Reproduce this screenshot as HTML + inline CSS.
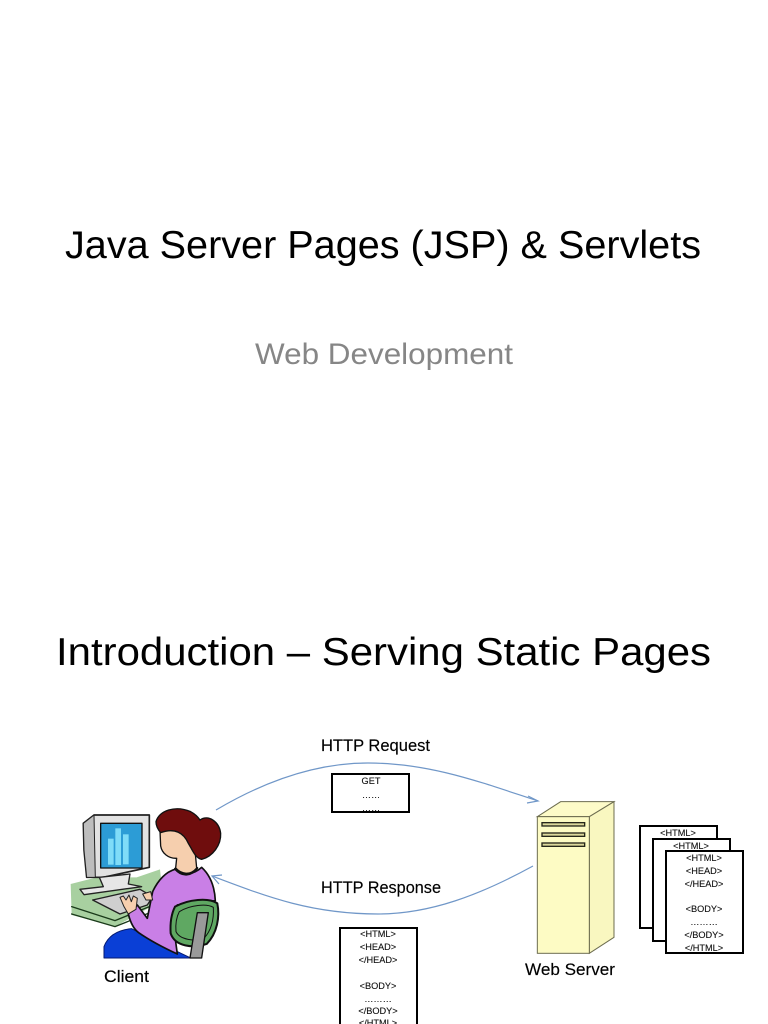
<!DOCTYPE html>
<html><head><meta charset="utf-8"><style>
html,body{margin:0;padding:0;background:#fff;width:768px;height:1024px;overflow:hidden}
svg{display:block;filter:blur(.35px)}
text{font-family:"Liberation Sans",sans-serif;fill:#000}
.l{font-size:16.3px;stroke:#000;stroke-width:.15}
.s{font-size:9.2px;text-anchor:middle;fill:#111;stroke:#111;stroke-width:.12}
</style></head><body>
<svg width="768" height="1024" viewBox="0 0 768 1024" xmlns="http://www.w3.org/2000/svg">
<text x="65" y="258" font-size="39" textLength="636" lengthAdjust="spacingAndGlyphs">Java Server Pages (JSP) &amp; Servlets</text>
<text x="255" y="364" font-size="30" textLength="258" lengthAdjust="spacingAndGlyphs" style="fill:#868686">Web Development</text>
<text x="56" y="665" font-size="39" textLength="655" lengthAdjust="spacingAndGlyphs">Introduction – Serving Static Pages</text>

<!-- arcs -->
<g fill="none" stroke="#7097c8" stroke-width="1.2">
<path d="M216 810C270 778 320 763 368 763C430 763 480 782 538 801"/>
<path d="M528 796L538 801L527 803"/>
<path d="M533 866C480 895 430 914 378 914C310 914 265 896 212 876"/>
<path d="M222 875L212 876L219 884"/>
</g>
<text class="l" x="321" y="751" textLength="109" lengthAdjust="spacingAndGlyphs">HTTP Request</text>
<text class="l" x="321" y="893" textLength="120" lengthAdjust="spacingAndGlyphs">HTTP Response</text>
<text class="l" x="104" y="982" textLength="45" lengthAdjust="spacingAndGlyphs">Client</text>
<text class="l" x="525" y="975" textLength="90" lengthAdjust="spacingAndGlyphs">Web Server</text>

<!-- request box -->
<rect x="332" y="774" width="77" height="38" fill="#fff" stroke="#000" stroke-width="2"/>
<text class="s" x="371" y="784">GET</text>
<text class="s" x="371" y="798">……</text>
<text class="s" x="371" y="811">……</text>

<!-- response box -->
<rect x="340" y="928" width="77" height="110" fill="#fff" stroke="#000" stroke-width="2"/>
<g>
<text class="s" x="378" y="937">&lt;HTML&gt;</text>
<text class="s" x="378" y="950">&lt;HEAD&gt;</text>
<text class="s" x="378" y="963">&lt;/HEAD&gt;</text>
<text class="s" x="378" y="989">&lt;BODY&gt;</text>
<text class="s" x="378" y="1002">………</text>
<text class="s" x="378" y="1014">&lt;/BODY&gt;</text>
<text class="s" x="378" y="1026">&lt;/HTML&gt;</text>
</g>

<!-- doc stack -->
<rect x="640" y="826" width="77" height="102" fill="#fff" stroke="#000" stroke-width="2"/>
<text class="s" x="678" y="836">&lt;HTML&gt;</text>
<rect x="653" y="839" width="77" height="102" fill="#fff" stroke="#000" stroke-width="2"/>
<text class="s" x="691" y="849">&lt;HTML&gt;</text>
<rect x="666" y="851" width="77" height="102" fill="#fff" stroke="#000" stroke-width="2"/>
<text class="s" x="704" y="861">&lt;HTML&gt;</text>
<text class="s" x="704" y="874">&lt;HEAD&gt;</text>
<text class="s" x="704" y="887">&lt;/HEAD&gt;</text>
<text class="s" x="704" y="912">&lt;BODY&gt;</text>
<text class="s" x="704" y="925">………</text>
<text class="s" x="704" y="938">&lt;/BODY&gt;</text>
<text class="s" x="704" y="951">&lt;/HTML&gt;</text>

<!-- server -->
<g transform="translate(510 780) scale(.3333)" stroke="#6d6d50" stroke-width="3">
<path d="M82 110L152 65L312 65L238 110Z" fill="#fdfbc8"/>
<path d="M238 110L312 65L312 472L238 520Z" fill="#f9f7c0"/>
<rect x="82" y="110" width="156" height="410" fill="#fdfbc4"/>
<g fill="#dcd89c" stroke="#26261a" stroke-width="4">
<rect x="96" y="128" width="128" height="10"/>
<rect x="96" y="159" width="128" height="10"/>
<rect x="96" y="189" width="128" height="10"/>
</g>
</g>

<!-- client clipart -->
<g transform="translate(60 790) scale(.3333)" stroke-linejoin="round" stroke-linecap="round">
<!-- desk -->
<path d="M32 282L110 262L230 262L300 238L310 330L165 410L35 375Z" fill="#a8d0a0" stroke="none"/>
<path d="M35 350L165 392L280 345M35 372L165 410L285 362" fill="none" stroke="#1a3a1a" stroke-width="4"/>
<!-- monitor -->
<path d="M70 100L102 75L268 75L268 232L130 262L80 262L72 180Z" fill="#e2e2e2" stroke="#222" stroke-width="5"/>
<path d="M70 100L102 75L106 262L80 262L72 180Z" fill="#bdbdbd" stroke="#222" stroke-width="3"/>
<rect x="122" y="100" width="124" height="134" fill="#2c9cd6" stroke="#111" stroke-width="4"/>
<rect x="144" y="146" width="17" height="78" fill="#7fdcf8"/>
<rect x="166" y="115" width="17" height="110" fill="#7fdcf8"/>
<rect x="189" y="133" width="17" height="90" fill="#7fdcf8"/>
<!-- stand and keyboard -->
<path d="M118 262L130 290L60 298L72 314L245 290L205 282L210 252Z" fill="#e6e6e6" stroke="#222" stroke-width="4"/>
<path d="M98 330L240 298L278 320L262 345L180 372Z" fill="#cfcfcf" stroke="#222" stroke-width="4"/>
<!-- pants -->
<path d="M132 504L132 470C145 435 175 420 215 416L300 460L392 504Z" fill="#0a3fd6" stroke="#051a70" stroke-width="3"/>
<!-- body -->
<path d="M345 238C320 245 295 268 278 305L262 385L232 345L205 372C212 400 222 418 236 428C275 455 315 475 352 492L345 440L336 380L352 345L466 332C464 290 450 255 425 232C405 250 370 262 345 238Z" fill="#c97fe6" stroke="#111" stroke-width="5"/>
<path d="M345 236C365 262 395 258 412 234" fill="none" stroke="#111" stroke-width="6"/>
<!-- neck and face -->
<path d="M300 122L360 118L405 180L410 234C392 256 365 254 347 234L350 205C325 206 306 190 302 168Z" fill="#f6cfae" stroke="#111" stroke-width="4"/>
<!-- hair -->
<path d="M288 95C298 62 345 45 392 65C405 72 415 82 420 90C445 72 478 95 482 130C484 165 458 200 425 208C405 205 395 175 385 160C372 130 345 112 302 128C295 120 288 108 288 95Z" fill="#6f0d0d" stroke="#111" stroke-width="4"/>
<!-- hand -->
<path d="M180 322L192 350L205 372L228 358L232 325L220 318L214 335L207 315L198 330L190 318Z" fill="#f6cfae" stroke="#222" stroke-width="3"/>
<path d="M248 312L272 305L278 330L258 330Z" fill="#f6cfae" stroke="#222" stroke-width="3"/>
<!-- chair -->
<path d="M345 350C385 328 445 322 472 340C480 380 472 430 440 462C400 476 345 470 332 430C330 400 335 370 345 350Z" fill="#5fa862" stroke="#111" stroke-width="6"/>
<path d="M358 365C390 345 440 340 460 352C462 385 455 420 432 445C405 455 360 450 348 425C346 400 350 380 358 365Z" fill="none" stroke="#111" stroke-width="3"/>
<path d="M412 368L445 368L425 504L390 504Z" fill="#9a9a9a" stroke="#111" stroke-width="4"/>
</g>
</svg>
</body></html>
